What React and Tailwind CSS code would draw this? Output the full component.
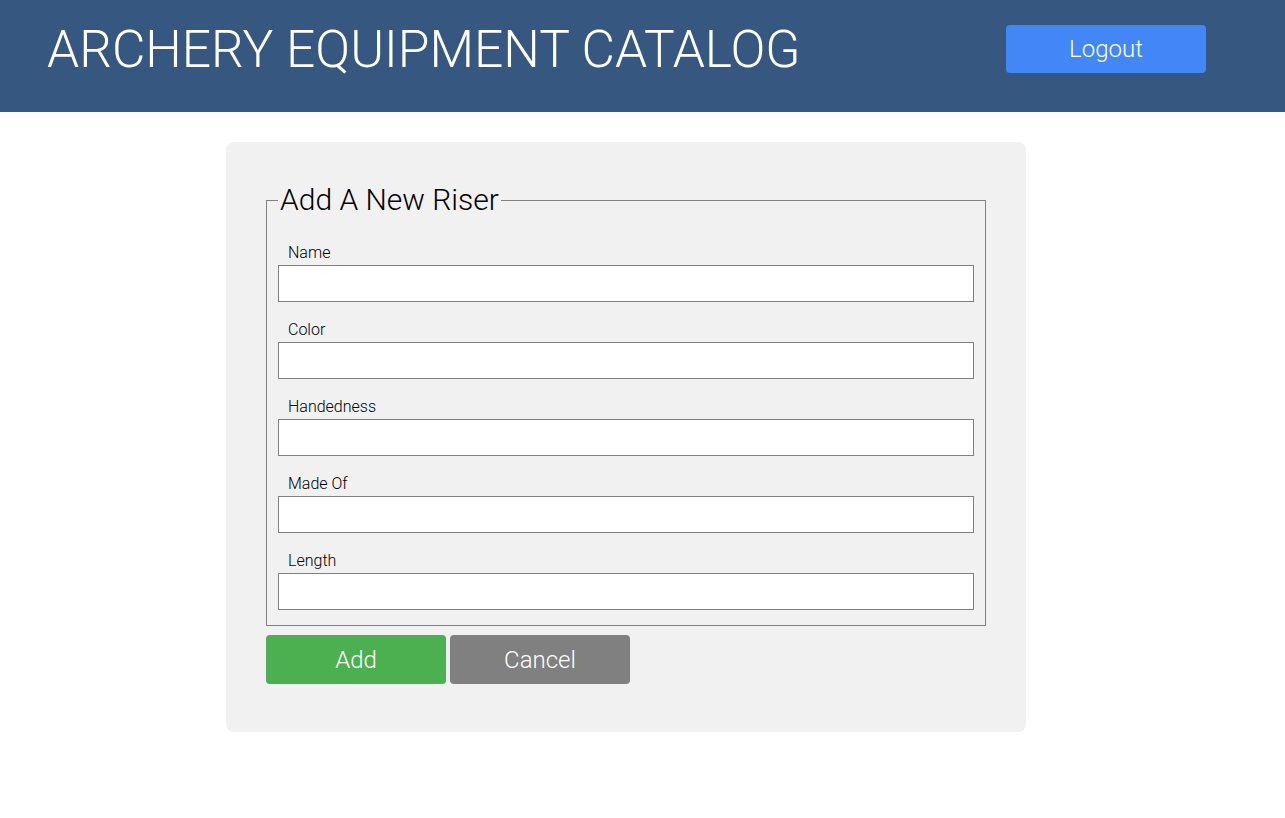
const FIELDS = ['Name', 'Color', 'Handedness', 'Made Of', 'Length']

export default function App() {
  return (
    <div className="min-h-[818px] bg-white font-['Roboto',sans-serif] font-light text-black">
      {/* Header */}
      <header className="h-[112px] bg-[#36577f] pt-[22px] pl-[47px] pr-[79px]">
        <div className="flex items-start justify-between">
          <h1 className="text-[51.5px] leading-[56px] text-white font-light">ARCHERY EQUIPMENT CATALOG</h1>
          <button className="mt-[3px] w-[200px] h-[48px] rounded-[4px] bg-[#4287f5] text-white text-[24px] font-light">
            Logout
          </button>
        </div>
      </header>

      {/* Form card */}
      <div className="w-[800px] ml-[226px] mt-[30px] bg-[#f1f1f1] rounded-[8px] px-[40px] pt-[40px] pb-[48px]">
        <form>
          <fieldset className="border border-[#808080] px-[11px] pb-[15px]">
            <legend className="px-[2px] text-[30px] leading-[36px] font-light">Add A New Riser</legend>
            <div className="mt-[25px] space-y-[18px]">
              {FIELDS.map((f) => (
                <div key={f}>
                  <label className="block pl-[10px] text-[16px] leading-[20px]">{f}</label>
                  <input
                    type="text"
                    className="block w-full h-[37px] mt-[2px] bg-white border border-[#808080] px-2 text-[16px] outline-none"
                  />
                </div>
              ))}
            </div>
          </fieldset>
          <div className="flex gap-[4px] mt-[9px]">
            <button type="button" className="w-[180px] h-[49px] rounded-[4px] bg-[#4caf50] text-white text-[24px] font-light">
              Add
            </button>
            <button type="button" className="w-[180px] h-[49px] rounded-[4px] bg-[#808080] text-white text-[24px] font-light">
              Cancel
            </button>
          </div>
        </form>
      </div>
    </div>
  )
}
